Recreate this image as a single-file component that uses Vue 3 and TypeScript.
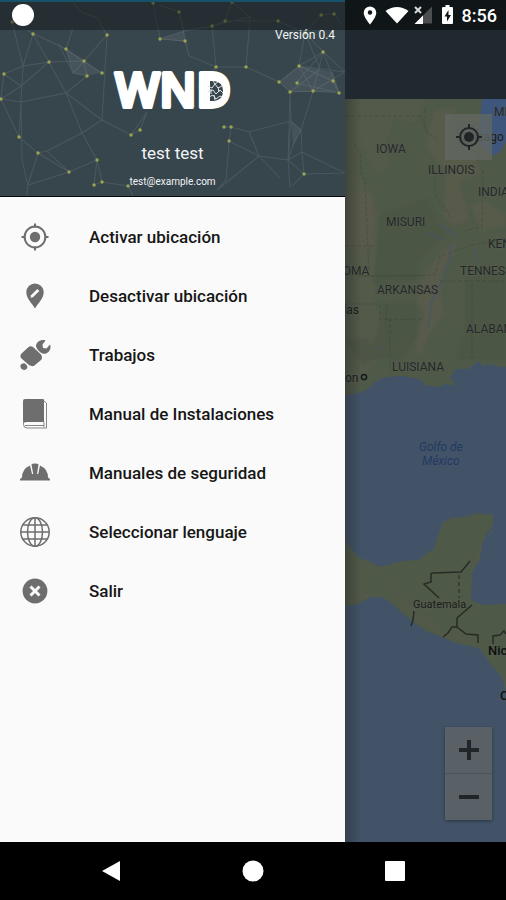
<script setup lang="ts">
interface MenuItem {
  icon: string
  label: string
}

const items: MenuItem[] = [
  { icon: 'locate', label: 'Activar ubicación' },
  { icon: 'pin', label: 'Desactivar ubicación' },
  { icon: 'wrench', label: 'Trabajos' },
  { icon: 'book', label: 'Manual de Instalaciones' },
  { icon: 'helmet', label: 'Manuales de seguridad' },
  { icon: 'globe', label: 'Seleccionar lenguaje' },
  { icon: 'exit', label: 'Salir' },
]

interface Place {
  name: string
  x: number
  y: number
  kind?: string
}

const places: Place[] = [
  { name: 'IOWA', x: 376, y: 153 },
  { name: 'ILLINOIS', x: 428, y: 174 },
  { name: 'INDIANA', x: 478, y: 196 },
  { name: 'MISURI', x: 386, y: 226 },
  { name: 'KENTUCKY', x: 488, y: 248 },
  { name: 'OKLAHOMA', x: 304, y: 275 },
  { name: 'TENNESSEE', x: 460, y: 275 },
  { name: 'ARKANSAS', x: 377, y: 294 },
  { name: 'ALABAMA', x: 466, y: 333 },
  { name: 'LUISIANA', x: 392, y: 371 },
  { name: 'MICHIGAN', x: 494, y: 116 },
  { name: 'Dallas', x: 326, y: 314, kind: 'city' },
  { name: 'Houston', x: 313, y: 382, kind: 'city' },
  { name: 'Chicago', x: 460, y: 141, kind: 'city' },
  { name: 'Golfo de', x: 419, y: 451, kind: 'sea' },
  { name: 'México', x: 422, y: 465, kind: 'sea' },
  { name: 'Guatemala', x: 413, y: 608, kind: 'small' },
  { name: 'Nicaragua', x: 488, y: 655, kind: 'country' },
  { name: 'Costa Rica', x: 500, y: 700, kind: 'country' },
]

const nodes: [number, number][] = [
  [12, 22], [33, 34], [66, 49], [49, 62], [84, 61], [102, 73], [87, 76], [107, 35],
  [4, 74], [1, 99], [19, 137], [38, 153], [69, 172], [97, 160], [94, 185], [102, 182],
  [131, 135], [140, 130], [128, 186], [153, 3], [160, 39], [179, 12], [232, 2], [212, 26],
  [225, 21], [185, 41], [216, 67], [246, 67], [278, 21], [305, 33], [321, 15], [334, 14],
  [323, 52], [279, 82], [290, 92], [313, 91], [299, 66], [333, 81], [339, 93], [297, 83],
  [224, 127], [231, 127], [229, 141], [304, 174],
]
</script>

<template>
  <div class="screen">
    <div class="stage">
      <aside class="drawer">
        <header class="profile">
          <svg class="network" viewBox="0 0 345 196" preserveAspectRatio="xMidYMid slice" aria-hidden="true">
            <g class="links">
              <path d="M12 22 L23 66 L21 102 L19 137 L38 153 L69 172 L97 160 L82 133 L66 93 L49 62 L84 61 L102 73 L66 49 L28 31 M4 74 L23 66 L49 62 L33 34 L23 66 M4 74 L21 86 L1 99 L21 102 L66 93 L87 76 L73 73 L66 49 L84 61 L73 73 L59 45 L102 73 M107 35 L97 18 L83 13 L73 3 M107 35 L102 120 L82 133 L47 151 L38 153 L28 185 L22 160 L21 102 M49 62 L21 86 L4 74 L1 99 L19 137 M102 120 L131 135 L140 130 L147 112 L131 135 M102 120 L66 93 M107 35 L84 61 L87 76 L66 93 M97 160 L94 185 L102 182 L97 160 M102 182 L128 186 L133 196 M47 151 L69 172 L28 185 M66 49 L73 28 M28 185 L27 196" />
              <path d="M153 3 L160 39 L185 41 L189 56 L216 67 L246 67 L279 82 L290 92 L313 91 L339 93 M160 39 L184 31 L179 12 L160 5 M184 31 L212 26 L225 21 L232 2 L250 17 L246 67 M225 21 L278 21 L305 33 L323 52 L299 66 L279 82 M212 26 L216 67 M250 17 L212 26 M321 15 L305 33 L299 66 L313 91 L323 52 L339 93 L333 81 L299 66 L345 72 M321 15 L334 14 L341 24 M323 52 L345 72 L313 91 M305 33 L320 69 L290 92 L291 121 L301 130 L302 155 L304 174 L288 160 L291 121 M339 93 L297 83 L302 76 L323 52 M290 92 L288 160 L290 188 M313 91 L301 130 L293 145 L288 160 L302 152 L345 173 L304 174 L292 186 M224 127 L231 127 L229 141 L226 180 L217 190 M231 127 L249 132 L259 156 L217 190 M229 141 L259 156 L288 160 M249 132 L291 121 M259 156 L280 178 M216 67 L198 88 M179 12 L189 56" />
            </g>
            <path class="haze" d="M66 49 L84 61 L102 73 L87 76 L73 73Z M279 82 L299 66 L333 72 L339 92 L290 92Z M291 121 L301 130 L293 145Z M160 39 L184 31 L185 42Z" />
            <g class="dots">
              <circle v-for="(n, i) in nodes" :key="i" :cx="n[0]" :cy="n[1]" r="1.7" />
            </g>
          </svg>
          <div class="shade"><span class="notice"></span></div>
          <p class="version">Versión 0.4</p>
          <svg class="logo" viewBox="0 0 126 44" role="img" aria-label="WND">
            <text x="63" y="38" text-anchor="middle">WND</text>
            <path class="core" d="M99 11h5q10 1 10 11t-10 11h-5z" />
            <path class="specks" d="M98 17l4 2 3-4 3 4 4-2M98 23l5-2 3 4 4-4 3 3M99 28l4-2 3 4 4-3 2 1M103 12l2 3 3-2M101 20v5M108 18l1 5M104 26l1 5" />
          </svg>
          <p class="name">test test</p>
          <p class="email">test@example.com</p>
        </header>
        <nav class="menu" aria-label="Principal">
          <button v-for="item in items" :key="item.label" type="button" class="item">
            <svg class="glyph" viewBox="0 0 32 32" aria-hidden="true">
              <g v-if="item.icon === 'locate'">
                <circle class="line" cx="16" cy="16" r="10.4" />
                <circle cx="16" cy="16" r="5.2" />
                <path class="line" d="M16 2.5v4M16 25.5v4M2.5 16h4M25.5 16h4" />
              </g>
              <g v-else-if="item.icon === 'pin'">
                <path d="M16 3.5a8.7 8.7 0 0 0-8.7 8.7C7.300 18.500 13 23 16 28.500c3-5.500 8.700-10 8.700-16.300A8.700 8.700 0 0 0 16 3.500z" />
                <path class="cut" d="M12 15.200l6.300-6.300 2 2-6.300 6.300-2.500.5z" />
              </g>
              <g v-else-if="item.icon === 'wrench'">
                <path d="M2.500 14.500 9 8.500Q11.500 6.500 14 8L22 15.500Q24 18.500 22 21L15.500 26.500Q13 28 10 26L3 20Q0 17.500 2.500 14.500z" />
                <path d="M1.500 26q2-2.500 4.500-1.500l2 2q1 2-.5 3.500-2 1.500-4 .5-2.500-1.500-2-4.500z" />
                <path d="M17 7.500C17 3 21 .5 25.500 1L26.500 1.500 23.500 5.500 24 9 27.500 9.500 31 5.500 31.500 7C32 12.500 27 16 23.500 14.500Q18.500 12 17 7.500z" />
              </g>
              <g v-else-if="item.icon === 'book'">
                <path d="M6 1h18a1 1 0 0 1 1 1v22H8a4 4 0 0 0-4 2V3A2 2 0 0 1 6 1z" />
                <path class="fine" d="M25 3l2.500 2v25H8q-3.500 0-3.500-3.500V23M25 24v5M6 27.500h19" />
              </g>
              <g v-else-if="item.icon === 'helmet'">
                <path d="M3 20.500Q3 12 11 8.500L13 17h1.200L12.500 7.500Q13 6.500 16 6.500t3.500 1L18 17h1.200L21 8.500Q29 12 29 20.500l2 1.500v1.500H1V22z" />
              </g>
              <g v-else-if="item.icon === 'globe'" class="wire">
                <circle cx="16" cy="16" r="14.200" />
                <ellipse cx="16" cy="16" rx="7.500" ry="14.200" />
                <path d="M16 2v28M2 16h28M4 9h24M4 23h24" />
              </g>
              <g v-else>
                <circle cx="16" cy="16" r="12.400" />
                <path class="cross" d="M11.500 11.500l9 9M20.500 11.500l-9 9" />
              </g>
            </svg>
            <span>{{ item.label }}</span>
          </button>
        </nav>
      </aside>

      <main class="content">
        <div class="status">
          <svg class="signals" viewBox="0 0 98 22" aria-hidden="true">
            <path d="M10 2.500a6.300 6.300 0 0 0-6.300 6.300C3.700 13.500 10 20.500 10 20.500s6.300-7 6.300-11.700A6.300 6.300 0 0 0 10 2.500z" />
            <circle class="hole" cx="10" cy="8.500" r="2.200" />
            <path d="M25.500 7Q37-1 48.500 7L37 19.500z" />
            <path class="dim" d="M72 2.500v17H55z" />
            <path d="M54.500 20l8.500-8.500V20z" />
            <path class="x" d="M55 3l6 6M61 3l-6 6" />
            <path d="M83 3h2.500V1h4v2H92a1 1 0 0 1 1 1v15a1 1 0 0 1-1 1h-9a1 1 0 0 1-1-1V4a1 1 0 0 1 1-1z" />
            <path class="hole" d="M88.500 6L84.500 12.500h2.500v5l4-6.500h-2.500z" />
          </svg>
          <time>8:56</time>
        </div>
        <div class="toolbar"></div>
        <div class="map">
          <svg class="terrain" viewBox="345 99 161 743" preserveAspectRatio="xMinYMin slice" role="img" aria-label="Mapa">
            <defs>
              <filter id="soft"><feGaussianBlur stdDeviation="1.500" /></filter>
              <clipPath id="north"><path d="M345 90H640V372L500 367 492 364 484 366 478 361 468 369 456 369 450 377 456 386 446 384 438 387 426 385 419 379 404 376 386 377 376 381 365 391 345 396z" /></clipPath>
            </defs>
            <rect class="water" x="345" y="99" width="400" height="1000" />
            <g clip-path="url(#north)">
              <rect class="land" x="345" y="99" width="400" height="310" />
              <g filter="url(#soft)">
                <path class="tan" d="M345 99H425L415 122 394 117 384 145 390 165 375 172 366 150 361 135 357 175 375 200 362 225 376 245 378 273 371 302 386 325 388 350 365 374 345 393z" opacity=".45" />
                <path class="tan" d="M345 192H368L376 210 375 246 345 250z M450 196 461 190 469 220 454 226 443 215z M447 248 457 242 454 254 443 269 440 292 443 315 430 332 422 352 415 355 418 330 424 316 417 300 421 280 435 260z" opacity=".85" />
                <path class="tan" d="M435 110 455 108 454 140 476 155 480 173 463 180 450 210 444 205 446 172 425 147z M470 205 485 200 506 215 506 226 482 232z" opacity=".55" />
                <path class="forest" d="M380 215 427 198 446 236 420 260 415 282 373 285zM384 304 415 300 418 335 402 360 370 358zM465 280 506 270V360H455L465 330zM380 255 420 250 413 282 380 286zM345 340 366 338 382 355 362 365z" />
              </g>
              <path class="lake" d="M482 99h24v42l-6 11-8 4-10-10-3-15z" />
              <path class="river" d="M388 234l2 3M452 244l-3 15-5 18-13 26-3 25M474 250l3 13M378 348l5 2M441 224l15 12M424 232l18 8" />
              <path class="border" d="M345 116H421l6 17 9 5M354 143l7 12v17l4 9 4 95M361 276l74-1 5-19 29-10 37-8M358 276h65M425 109v20M440 281h66M387 304l-1 16 36-1M472 283v77M390 318v55M435 170v25l17 24M483 170l-1 57-17 4M345 304h35v15h8M345 246h30" />
            </g>
            <path class="land" d="M345 541L359 558 369 561 380 567 402 561 419 560 428 552 434 549 442 523 452 518 465 517 478 513 493 515 493 525 486 534 482 545 479 560 472 573 471 600 482 605 506 604 600 600V760H530L501 676 490 663 479 648 464 645 451 641 426 631 413 622 390 602 382 597 371 597 356 605 345 606z" />
            <path class="tan" d="M350 572h24l15 8 11 23 17 19 31 17 34 4-42-14-35-28-15-24zM345 602h15l15-7-18-4z" opacity=".3" />
            <path class="tan" d="M481 548l-3 14M493 529l-4 6" stroke="currentColor" />
            <path class="frontier" d="M470 561l-9 11-29 1-1 1v8l-7 2 15 14M414 611l-1 9-2 6M472 605l-15 13v9l-5 0-4 6-5 4M457 627l9 7 12 1v8M493 644v-8l7-1 4-4 2 3" />
            <path class="frontier dashed" d="M459 575v23" />
            <circle class="ring" cx="364" cy="377" r="2.600" />
            <text v-for="p in places" :key="p.name" :x="p.x" :y="p.y" :class="p.kind">{{ p.name }}</text>
          </svg>
          <button type="button" class="control locate" aria-label="Mi ubicación">
            <svg viewBox="0 0 32 32" aria-hidden="true">
              <circle class="ringline" cx="16" cy="16" r="9" />
              <circle cx="16" cy="16" r="5" />
              <path class="ringline" d="M16 3v4M16 25v4M3 16h4M25 16h4" />
            </svg>
          </button>
          <div class="zoom">
            <button type="button" class="control" aria-label="Acercar">
              <svg viewBox="0 0 32 32" aria-hidden="true"><path d="M14 6h4v8h8v4h-8v8h-4v-8H6v-4h8z" /></svg>
            </button>
            <button type="button" class="control" aria-label="Alejar">
              <svg viewBox="0 0 32 32" aria-hidden="true"><path d="M6 14h20v4H6z" /></svg>
            </button>
          </div>
        </div>
      </main>
    </div>

    <footer class="navbar">
      <button type="button" aria-label="Atrás"><svg viewBox="0 0 24 24"><path d="M3 12 21 2v20z" /></svg></button>
      <button type="button" aria-label="Inicio"><svg viewBox="0 0 24 24"><circle cx="12" cy="12" r="10.500" /></svg></button>
      <button type="button" aria-label="Recientes"><svg viewBox="0 0 24 24"><rect x="2" y="2" width="20" height="20" rx="1" /></svg></button>
    </footer>
  </div>
</template>

<style>
body {
  margin: 0;
  background: #000;
}
</style>

<style scoped>
.screen {
  display: flex;
  flex-direction: column;
  min-height: 100vh;
  font-family: Roboto, 'Liberation Sans', sans-serif;
}
button {
  border: 0;
  padding: 0;
  background: none;
  font: inherit;
  color: inherit;
}
p {
  margin: 0;
}
svg {
  display: block;
}
.stage {
  flex: 1;
  display: flex;
}
.drawer {
  flex: 0 0 68.2%;
  background: #fafafa;
}
.profile {
  position: relative;
  display: flex;
  flex-direction: column;
  align-items: center;
  box-sizing: border-box;
  padding-bottom: 8px;
  border-bottom: 1px solid #050708;
  background: #37454c;
  color: #f2f4f5;
}
.network {
  position: absolute;
  inset: 0;
  width: 100%;
  height: 100%;
}
.links {
  fill: none;
  stroke: #8d9a9f;
  stroke-width: 1;
  opacity: 0.22;
}
.haze {
  fill: #a9b5ba;
  opacity: 0.12;
}
.dots {
  fill: #9ba450;
}
.shade {
  position: relative;
  align-self: stretch;
  box-sizing: border-box;
  height: 30px;
  padding: 2px 12px;
  border-top: 2px solid #17526b;
  background: rgba(20, 24, 24, 0.5);
}
.notice {
  display: block;
  width: 22px;
  height: 22px;
  border-radius: 50%;
  background: #fff;
}
.version {
  position: relative;
  align-self: flex-end;
  padding-right: 10px;
  font-size: 12px;
  line-height: 10px;
}
.logo {
  position: relative;
  width: 126px;
  height: 44px;
  margin-top: 29px;
  overflow: visible;
}
.logo text {
  font-family: 'Open Sans', Roboto, sans-serif;
  font-weight: 600;
  font-size: 47px;
  fill: #fff;
  stroke: #fff;
  stroke-width: 4;
  stroke-linejoin: round;
}
.core {
  fill: #37454c;
  stroke: #fff;
  stroke-width: 2;
}
.specks {
  fill: none;
  stroke: #dfe3e5;
  stroke-width: 1;
}
.name {
  position: relative;
  margin-top: 30px;
  font-size: 17px;
  line-height: 20px;
}
.email {
  position: relative;
  margin-top: 13px;
  font-size: 10px;
  line-height: 12px;
}
.menu {
  display: flex;
  flex-direction: column;
  padding: 10px 0;
}
.item {
  display: flex;
  align-items: center;
  gap: 38px;
  height: 59px;
  padding: 0 19px;
  font-size: 17px;
  font-weight: 500;
  line-height: 24px;
  color: #161616;
  text-align: left;
}
.glyph {
  flex: none;
  width: 32px;
  height: 32px;
  fill: #6e6e6e;
}
.line {
  fill: none;
  stroke: #6e6e6e;
  stroke-width: 2;
}
.fine {
  fill: none;
  stroke: #858585;
  stroke-width: 1;
}
.wire {
  fill: none;
  stroke: #6e6e6e;
  stroke-width: 1.5;
}
.cut {
  fill: #fafafa;
}
.cross {
  fill: none;
  stroke: #fafafa;
  stroke-width: 3;
}
.content {
  flex: 1;
  display: flex;
  flex-direction: column;
  min-width: 0;
}
.status {
  display: flex;
  align-items: center;
  justify-content: flex-end;
  gap: 4px;
  height: 30px;
  padding-right: 9px;
  background: #101518;
  color: #fff;
  font-size: 18px;
  font-weight: 500;
}
.signals {
  width: 98px;
  height: 22px;
  fill: #fff;
}
.signals .hole {
  fill: #101518;
}
.signals .dim {
  fill: #4b4f51;
}
.signals .x {
  stroke: #d8d8d8;
  stroke-width: 2;
}
.toolbar {
  height: 69px;
  background: #20292f;
}
.map {
  position: relative;
  flex: 1;
  overflow: hidden;
  background: #425368;
}
.map::after {
  content: '';
  position: absolute;
  inset: 0 auto 0 0;
  width: 16px;
  background: linear-gradient(90deg, rgba(30, 36, 36, 0.4), rgba(50, 60, 50, 0));
}
.terrain {
  position: absolute;
  inset: 0;
  width: 100%;
  height: 100%;
}
.terrain text {
  font-size: 12px;
  fill: #23272a;
  stroke: #626658;
  stroke-width: 1;
  stroke-opacity: 0.4;
  paint-order: stroke;
}
.terrain .city {
  fill: #171a1b;
}
.terrain .sea {
  fill: #213a60;
  stroke: none;
  font-style: italic;
}
.terrain .small {
  font-size: 11px;
  fill: #181b19;
}
.terrain .country {
  font-size: 13px;
  font-weight: 500;
  fill: #0c0e0e;
}
.water {
  fill: #425368;
}
.land {
  fill: #4f5948;
}
.tan {
  fill: #5b5b4c;
  color: #5b5b4c;
}
.forest {
  fill: #485445;
  opacity: 0.7;
}
.lake {
  fill: #3e557c;
}
.river {
  fill: none;
  stroke: #46566a;
  stroke-width: 1.2;
}
.border {
  fill: none;
  stroke: #3d4539;
  stroke-width: 1;
  stroke-dasharray: 4 2;
  opacity: 0.5;
}
.frontier {
  fill: none;
  stroke: #252c24;
  stroke-width: 1.5;
}
.dashed {
  stroke-dasharray: 4 3;
  opacity: 0.7;
}
.ring {
  fill: none;
  stroke: #171a1b;
  stroke-width: 1.5;
}
.control {
  display: flex;
  align-items: center;
  justify-content: center;
  width: 47px;
  height: 46px;
  background: #596066;
}
.control svg {
  width: 32px;
  height: 32px;
  fill: #202528;
}
.locate {
  position: absolute;
  top: 15px;
  right: 14px;
  background: rgba(98, 103, 98, 0.8);
}
.ringline {
  fill: none;
  stroke: #202528;
  stroke-width: 2;
}
.zoom {
  position: absolute;
  right: 14px;
  bottom: 22px;
  display: grid;
  gap: 1px;
  background: #4d5459;
  box-shadow: 0 1px 3px rgba(0, 0, 0, 0.4);
}
.navbar {
  display: flex;
  justify-content: center;
  gap: 118px;
  align-items: center;
  height: 58px;
  background: #000;
}
.navbar svg {
  width: 24px;
  height: 24px;
  fill: #fff;
}
</style>
